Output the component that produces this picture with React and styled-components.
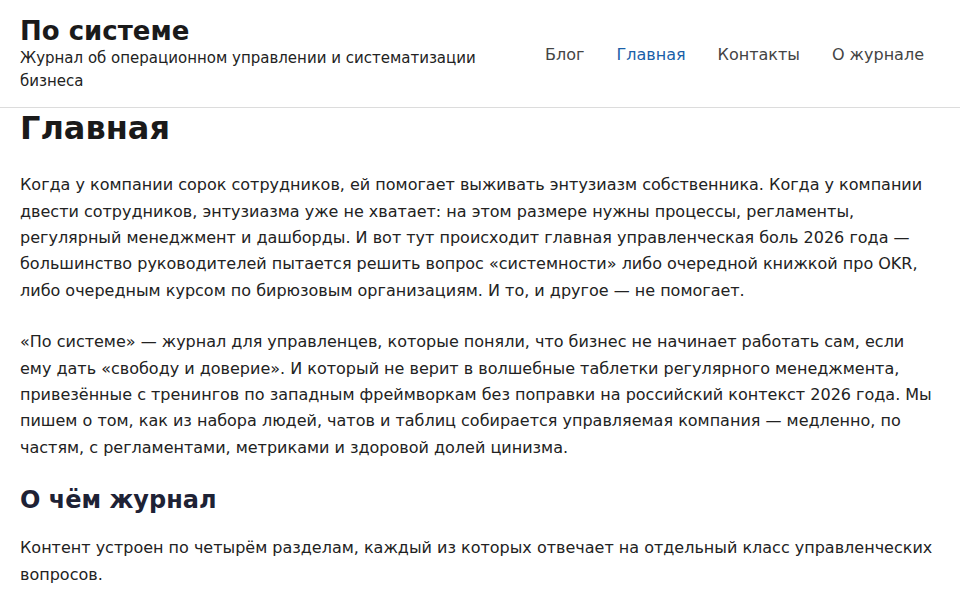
import React from 'react';
import styled, { createGlobalStyle } from 'styled-components';

const GlobalStyle = createGlobalStyle`
  html, body {
    margin: 0;
    padding: 0;
    background: #ffffff;
  }
  body {
    font-family: "DejaVu Sans", "Noto Sans", sans-serif;
    color: #1f1f1f;
  }
`;

const Header = styled.header`
  display: flex;
  align-items: center;
  justify-content: space-between;
  padding: 16px 20px 14px;
  border-bottom: 1px solid #dcdcdc;
`;

const Brand = styled.div`
  display: flex;
  flex-direction: column;
  max-width: 470px;
`;

const SiteTitle = styled.div`
  font-size: 26px;
  font-weight: 700;
  color: #1a1a1a;
  line-height: 1.2;
`;

const Tagline = styled.div`
  font-size: 15px;
  line-height: 23px;
  color: #222;
`;

const Nav = styled.nav`
  display: flex;
  gap: 32px;
  padding-right: 16px;
`;

const NavLink = styled.a`
  font-size: 16px;
  color: ${p => (p.$active ? '#1a5fa8' : '#444')};
  text-decoration: none;
`;

const Main = styled.main`
  padding: 0 20px;
`;

const Title = styled.h1`
  font-size: 32px;
  line-height: 37px;
  font-weight: 700;
  color: #1a1a1a;
  margin: 2px 0 25px;
`;

const Paragraph = styled.p`
  font-size: 16px;
  line-height: 26.4px;
  color: #222;
  margin: 0 0 25px;
`;

const SectionTitle = styled.h2`
  font-size: 24px;
  line-height: 28px;
  font-weight: 700;
  color: #1e2235;
  margin: 4px 0 21px;
`;

export default function App() {
  const links = ['Блог', 'Главная', 'Контакты', 'О журнале'];
  return (
    <>
      <GlobalStyle />
      <Header>
        <Brand>
          <SiteTitle>По системе</SiteTitle>
          <Tagline>Журнал об операционном управлении и систематизации бизнеса</Tagline>
        </Brand>
        <Nav>
          {links.map(l => (
            <NavLink key={l} href="#" $active={l === 'Главная'}>{l}</NavLink>
          ))}
        </Nav>
      </Header>
      <Main>
        <Title>Главная</Title>
        <Paragraph>
          Когда у компании сорок сотрудников, ей помогает выживать энтузиазм собственника. Когда у компании двести сотрудников, энтузиазма уже не хватает: на этом размере нужны процессы, регламенты, регулярный менеджмент и дашборды. И вот тут происходит главная управленческая боль 2026 года — большинство руководителей пытается решить вопрос «системности» либо очередной книжкой про OKR, либо очередным курсом по бирюзовым организациям. И то, и другое — не помогает.
        </Paragraph>
        <Paragraph>
          «По системе» — журнал для управленцев, которые поняли, что бизнес не начинает работать сам, если ему дать «свободу и доверие». И который не верит в волшебные таблетки регулярного менеджмента, привезённые с тренингов по западным фреймворкам без поправки на российский контекст 2026 года. Мы пишем о том, как из набора людей, чатов и таблиц собирается управляемая компания — медленно, по частям, с регламентами, метриками и здоровой долей цинизма.
        </Paragraph>
        <SectionTitle>О чём журнал</SectionTitle>
        <Paragraph>
          Контент устроен по четырём разделам, каждый из которых отвечает на отдельный класс управленческих вопросов.
        </Paragraph>
      </Main>
    </>
  );
}
